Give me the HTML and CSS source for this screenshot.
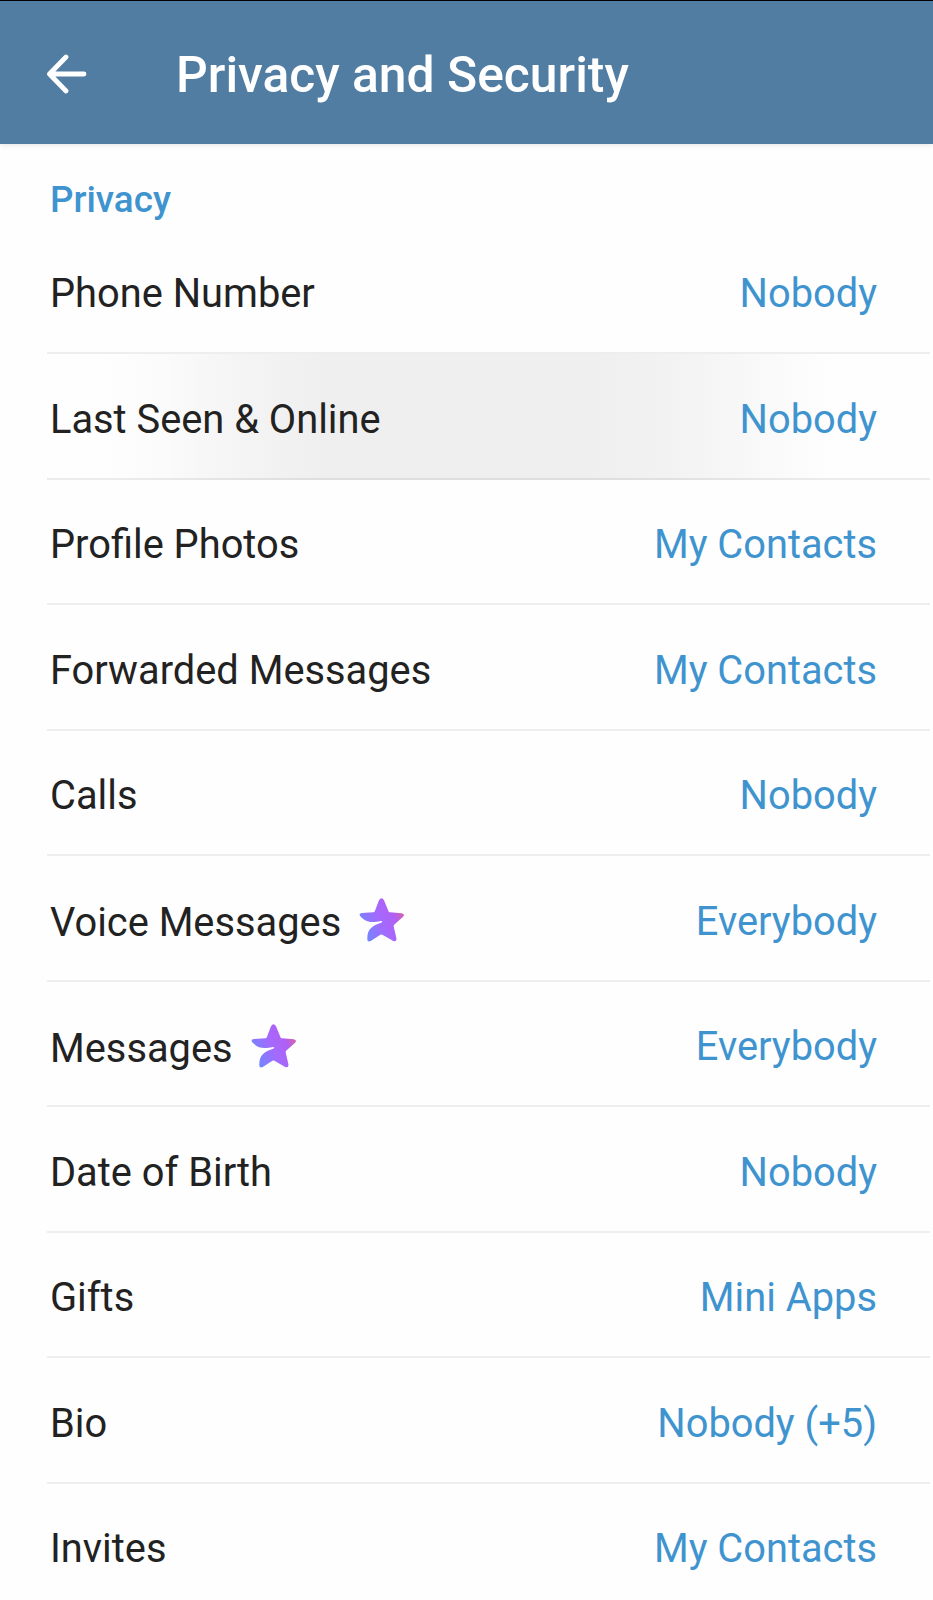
FILE: index.html
```html
<!DOCTYPE html>
<html lang="en">
<head>
    <meta charset="UTF-8">
    <meta name="viewport" content="width=device-width, initial-scale=1.0">
    <title>Privacy and Security</title>
    <link rel="stylesheet" href="styles.css">
</head>
<body>
    <!-- Shared premium star -->
    <svg class="defs" width="0" height="0">
        <defs>
            <linearGradient id="premium" x1="0" y1="0.75" x2="1" y2="0.25">
                <stop offset="0" stop-color="#6b8bff"/>
                <stop offset="0.45" stop-color="#a36aff"/>
                <stop offset="0.75" stop-color="#b060f4"/>
                <stop offset="1" stop-color="#e0609c"/>
            </linearGradient>
            <symbol id="star" viewBox="0 0 46 44">
                <path fill="url(#premium)" d="M20 2.2Q22.5-1.6 25 2.2L29.6 13.4Q30 14.2 31 14.3L42.7 15.2Q46.6 16 43.8 19L35.4 26.4Q34.4 27.3 34.7 28.6L37.4 40.2Q37.9 44.4 34.2 43L23.4 36.7Q22.4 36.2 21.4 36.8L11.8 43Q8 44.5 8.3 40.3C8.5 31 12.8 27.8 22.7 24.5Q24 22.9 22 22.9C13.5 24.8 7.5 25.2 1.3 18.3Q-0.8 15.3 3 15L14.4 14.3Q15.4 14.2 15.8 13.3Z"/>
            </symbol>
        </defs>
    </svg>

    <header class="header">
        <svg class="back" viewBox="0 0 40 40">
            <path d="M37 20H3M19 3L2.5 20L19 37"/>
        </svg>
        <h1>Privacy and Security</h1>
    </header>

    <main class="settings">
        <h2>Privacy</h2>
        <ul class="list">
            <li class="row">
                <span class="label">Phone Number</span>
                <span class="value">Nobody</span>
            </li>
            <li class="row pressed">
                <span class="label">Last Seen &amp; Online</span>
                <span class="value">Nobody</span>
            </li>
            <li class="row">
                <span class="label">Profile Photos</span>
                <span class="value">My Contacts</span>
            </li>
            <li class="row">
                <span class="label">Forwarded Messages</span>
                <span class="value">My Contacts</span>
            </li>
            <li class="row">
                <span class="label">Calls</span>
                <span class="value">Nobody</span>
            </li>
            <li class="row premium">
                <span class="label">Voice Messages</span>
                <svg class="star"><use href="#star"/></svg>
                <span class="value">Everybody</span>
            </li>
            <li class="row premium">
                <span class="label">Messages</span>
                <svg class="star"><use href="#star"/></svg>
                <span class="value">Everybody</span>
            </li>
            <li class="row">
                <span class="label">Date of Birth</span>
                <span class="value">Nobody</span>
            </li>
            <li class="row">
                <span class="label">Gifts</span>
                <span class="value">Mini Apps</span>
            </li>
            <li class="row">
                <span class="label">Bio</span>
                <span class="value">Nobody (+5)</span>
            </li>
            <li class="row">
                <span class="label">Invites</span>
                <span class="value">My Contacts</span>
            </li>
        </ul>
    </main>
</body>
</html>
```
FILE: styles.css
```css
* {
    box-sizing: border-box;
}

body {
    margin: 0;
    height: 1600px;
    overflow: hidden;
    background: #fefefe;
    color: #222;
    font-family: Roboto, sans-serif;
}

.defs {
    display: block;
}

.header {
    display: flex;
    align-items: center;
    height: 144px;
    padding: 4px 47px 0;
    border-top: 1px solid #000;
    background: #527da3;
    box-shadow: 0 1px 5px rgba(0, 0, 0, 0.1);
}

.back {
    width: 40px;
    height: 40px;
    margin-bottom: 1px;
    fill: none;
    stroke: #fff;
    stroke-width: 4.8;
    stroke-linecap: round;
    stroke-linejoin: round;
}

h1 {
    margin: 0 0 0 89px;
    color: #fff;
    font-size: 49.8px;
    font-weight: 500;
    line-height: 58px;
}

h2 {
    margin: 0;
    padding: 34px 50px 0;
    height: 84.5px;
    color: #3f94d0;
    font-size: 36.8px;
    font-weight: 500;
    line-height: 44px;
}

.list {
    list-style: none;
    margin: 0;
    padding: 0 3px 0 47px;
}

.row {
    display: flex;
    align-items: center;
    height: 125.5px;
    padding: 7px 53px 0 3px;
    border-bottom: 2px solid #eee;
    font-size: 39.8px;
}

.row:last-child {
    border-bottom-color: transparent;
}

/* touch ripple fading out to both sides */
.pressed {
    border-bottom-color: rgba(0, 0, 0, 0.07);
    background: linear-gradient(90deg, #fefefe 6%, #fbfbfb 13%, #f5f5f5 21%, #efefef 31%, #efefef 62%, #f2f2f2 70%, #f5f5f5 75%, #f9f9f9 81%, #fefefe 89%);
}

.value {
    margin-left: auto;
    color: #3f94d0;
}

.premium .label {
    padding-top: 3px;
}

.star {
    width: 46px;
    height: 44px;
    margin: -2px 0 0 18px;
}
```
